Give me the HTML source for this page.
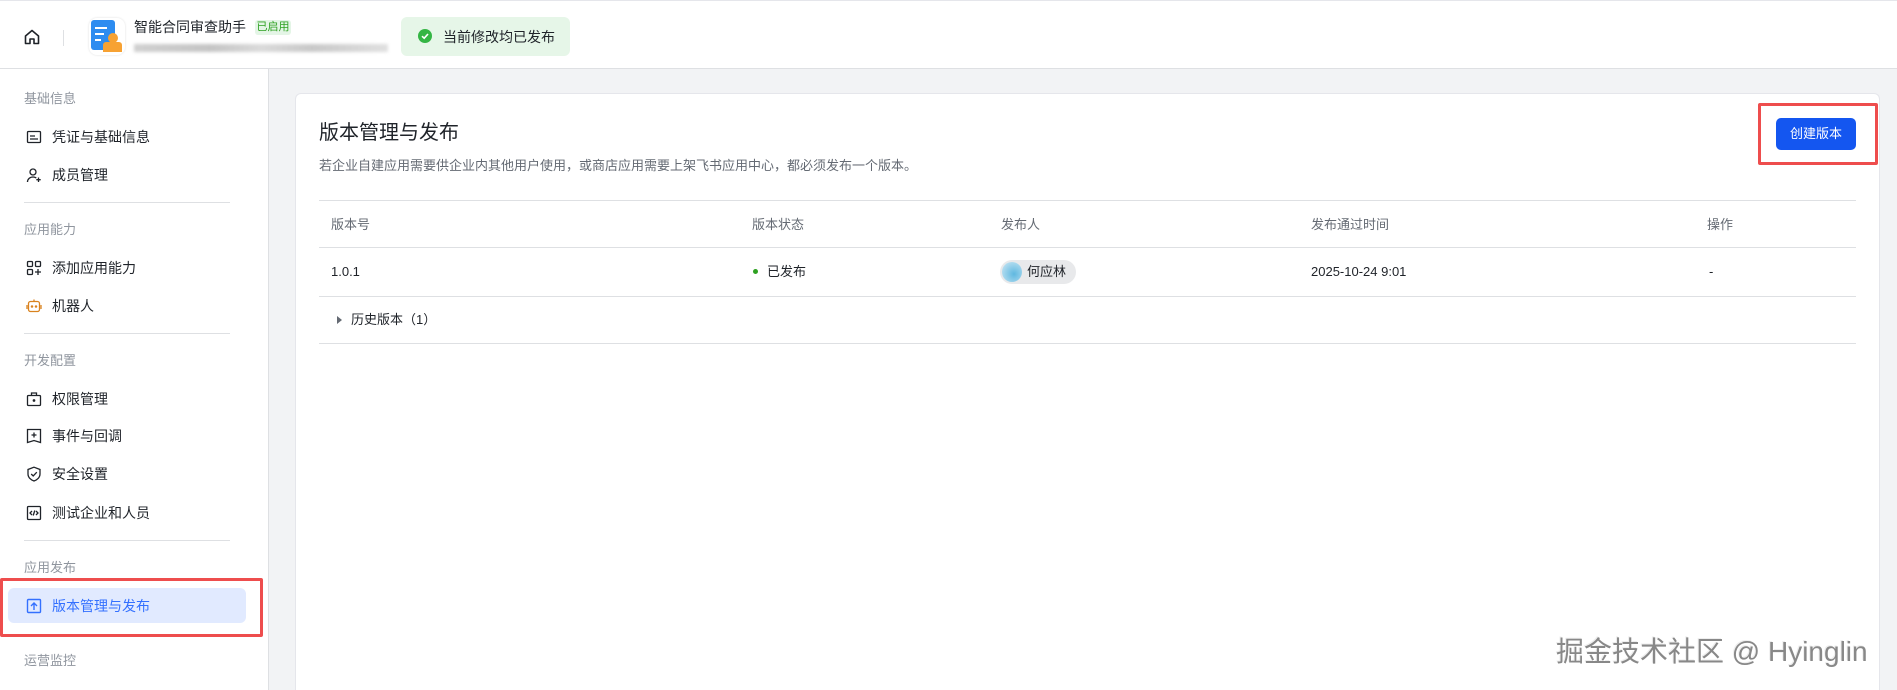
<!DOCTYPE html>
<html style="width:1897px;height:690px;overflow:hidden"><head><meta charset="utf-8"><style>
*{box-sizing:border-box;margin:0;padding:0}
body{width:1897px;height:690px;overflow:hidden;background:#f2f3f5;font-family:"Liberation Sans","Noto Sans CJK SC",sans-serif;color:#1f2329;position:relative}
.a{position:absolute}
.hdr{left:0;top:0;width:1897px;height:69px;background:#fff;border-top:1px solid #e5e6eb;border-bottom:1px solid #dee0e3}
.side{left:0;top:69px;width:269px;height:621px;background:#fff;border-right:1px solid #dee0e3}
.lbl{left:24px;font-size:13px;color:#8f959e;line-height:16px}
.it{left:52px;font-size:14px;color:#1f2329;line-height:16px}
.dv{left:24px;width:206px;height:1px;background:#dee0e3}
.ic{left:26px;width:16px;height:16px}
.card{left:295px;top:93px;width:1585px;height:597px;background:#fff;border:1px solid #e5e6eb;border-bottom:none;border-radius:6px 6px 0 0}
.th{font-size:13px;color:#646a73;top:217px;line-height:16px}
.td{font-size:13px;color:#1f2329;top:264px;line-height:16px}
.ln{left:319px;width:1537px;height:1px;background:#dee0e3}
</style></head><body>
<div class="a hdr"></div>
<svg class="a" style="left:23px;top:28px" width="18" height="18" viewBox="0 0 18 18" fill="none" stroke="#1f2329" stroke-width="1.6"><path d="M2.5 8 9 2.5 15.5 8V15.5H11V11H7V15.5H2.5Z" stroke-linejoin="round"/></svg>
<div class="a" style="left:63px;top:30px;width:1px;height:16px;background:#dee0e3"></div>
<div class="a" style="left:89px;top:18px;width:36px;height:37px;border-radius:8px;background:#fff;box-shadow:0 0 2px #ddd"></div>
<div class="a" style="left:91px;top:20px;width:24px;height:30px;border-radius:3px;background:#2d8cf0"></div>
<div class="a" style="left:95px;top:27px;width:12px;height:2px;background:#fff"></div>
<div class="a" style="left:95px;top:33px;width:9px;height:2px;background:#fff"></div>
<div class="a" style="left:95px;top:39px;width:6px;height:2px;background:#fff"></div>
<div class="a" style="left:108px;top:33px;width:10px;height:10px;border-radius:50%;background:#f7a233"></div>
<div class="a" style="left:103px;top:42px;width:19px;height:10px;border-radius:3px 3px 0 0;background:#f7a233"></div>
<div class="a" style="left:134px;top:19px;font-size:14px;line-height:16px">智能合同审查助手</div>
<div class="a" style="left:255px;top:20px;width:36px;height:15px;background:#e4f5e6;border-radius:3px;color:#2ea121;font-size:11px;line-height:15px;text-align:center">已启用</div>
<div class="a" style="left:134px;top:44px;width:254px;height:8px;background:linear-gradient(90deg,#d0d0d0,#c4c4c4 30%,#dadada 50%,#c8c8c8 70%,#e0e0e0);filter:blur(1.5px)"></div>
<div class="a" style="left:401px;top:17px;width:169px;height:39px;background:#e6f6e8;border-radius:6px"></div>
<div class="a" style="left:418px;top:29px;width:14px;height:14px;border-radius:50%;background:#34b544"></div>
<svg class="a" style="left:418px;top:29px" width="14" height="14" viewBox="0 0 14 14"><path d="M4 7.2 6.2 9.2 10 5" fill="none" stroke="#fff" stroke-width="1.6"/></svg>
<div class="a" style="left:443px;top:29px;font-size:14px;line-height:16px">当前修改均已发布</div>

<div class="a side"></div>
<div class="a lbl" style="top:91px">基础信息</div>
<svg class="a ic" style="top:129px" viewBox="0 0 16 16" fill="none" stroke="#1f2329" stroke-width="1.3"><rect x="1.5" y="2.5" width="13" height="11" rx="1"/><path d="M4 7h5M4 10h8"/></svg>
<div class="a it" style="top:129px">凭证与基础信息</div>
<svg class="a ic" style="top:167px" viewBox="0 0 16 16" fill="none" stroke="#1f2329" stroke-width="1.3"><circle cx="7" cy="5" r="3"/><path d="M1.5 15c0-3 2.5-5 5.5-5 1.5 0 2.5.4 3.3 1M12.5 10.5v4.5M10.3 12.7h4.4"/></svg>
<div class="a it" style="top:167px">成员管理</div>
<div class="a dv" style="top:202px"></div>
<div class="a lbl" style="top:222px">应用能力</div>
<svg class="a ic" style="top:260px" viewBox="0 0 16 16" fill="none" stroke="#1f2329" stroke-width="1.3"><rect x="1.5" y="1.5" width="5" height="5" rx="1"/><rect x="9.5" y="1.5" width="5" height="5" rx="1"/><rect x="1.5" y="9.5" width="5" height="5" rx="1"/><path d="M12 9v6M9 12h6"/></svg>
<div class="a it" style="top:260px">添加应用能力</div>
<svg class="a ic" style="top:298px" viewBox="0 0 16 16" fill="none" stroke="#d9821e" stroke-width="1.3"><rect x="2.5" y="3.5" width="11" height="10" rx="2"/><path d="M1 7v4M15 7v4M8 1.5v2"/><circle cx="6" cy="8.5" r=".6" fill="#d9821e"/><circle cx="10" cy="8.5" r=".6" fill="#d9821e"/></svg>
<div class="a it" style="top:298px">机器人</div>
<div class="a dv" style="top:333px"></div>
<div class="a lbl" style="top:353px">开发配置</div>
<svg class="a ic" style="top:391px" viewBox="0 0 16 16" fill="none" stroke="#1f2329" stroke-width="1.3"><rect x="1.5" y="4.5" width="13" height="10" rx="1"/><path d="M5.5 4.5V2h5v2.5"/><circle cx="8" cy="9.5" r=".7" fill="#1f2329"/></svg>
<div class="a it" style="top:391px">权限管理</div>
<svg class="a ic" style="top:428px" viewBox="0 0 16 16" fill="none" stroke="#1f2329" stroke-width="1.3"><path d="M1.5 1.5h13v13l-6.5-2-6.5 2z"/><path d="M8 4.5v5M5.5 7h5"/></svg>
<div class="a it" style="top:428px">事件与回调</div>
<svg class="a ic" style="top:466px" viewBox="0 0 16 16" fill="none" stroke="#1f2329" stroke-width="1.3"><path d="M8 1.2 14 3.5V8c0 3.5-3 6-6 7-3-1-6-3.5-6-7V3.5z"/><path d="M5.2 8 7.2 10 10.8 6.2"/></svg>
<div class="a it" style="top:466px">安全设置</div>
<svg class="a ic" style="top:505px" viewBox="0 0 16 16" fill="none" stroke="#1f2329" stroke-width="1.3"><rect x="1.5" y="1.5" width="13" height="13" rx="1"/><path d="M6 6 4 8l2 2M10 6l2 2-2 2M8.8 5.5 7.2 10.5"/></svg>
<div class="a it" style="top:505px">测试企业和人员</div>
<div class="a dv" style="top:540px"></div>
<div class="a lbl" style="top:560px">应用发布</div>
<div class="a" style="left:8px;top:588px;width:238px;height:35px;background:#e1eaff;border-radius:6px"></div>
<svg class="a ic" style="top:598px" viewBox="0 0 16 16" fill="none" stroke="#3370ff" stroke-width="1.4"><rect x="1.5" y="1.5" width="13" height="13" rx="1"/><path d="M8 12V5M5 8l3-3 3 3"/></svg>
<div class="a it" style="top:598px;color:#3370ff">版本管理与发布</div>
<div class="a" style="left:0;top:578px;width:263px;height:59px;border:3px solid #ee4d4d;border-radius:2px"></div>
<div class="a lbl" style="top:653px">运营监控</div>

<div class="a card"></div>
<div class="a" style="left:319px;top:121px;font-size:20px;line-height:24px">版本管理与发布</div>
<div class="a" style="left:319px;top:158px;font-size:13px;color:#646a73;line-height:16px">若企业自建应用需要供企业内其他用户使用，或商店应用需要上架飞书应用中心，都必须发布一个版本。</div>
<div class="a" style="left:1776px;top:118px;width:80px;height:32px;background:#1456f0;border-radius:5px;color:#fff;font-size:13px;line-height:32px;text-align:center">创建版本</div>
<div class="a" style="left:1758px;top:103px;width:120px;height:62px;border:3px solid #ee4d4d;border-radius:2px"></div>
<div class="a ln" style="top:200px"></div>
<div class="a th" style="left:331px">版本号</div>
<div class="a th" style="left:752px">版本状态</div>
<div class="a th" style="left:1001px">发布人</div>
<div class="a th" style="left:1311px">发布通过时间</div>
<div class="a th" style="left:1707px">操作</div>
<div class="a ln" style="top:247px"></div>
<div class="a td" style="left:331px">1.0.1</div>
<div class="a" style="left:753px;top:269px;width:5px;height:5px;border-radius:50%;background:#2ea121"></div>
<div class="a td" style="left:767px">已发布</div>
<div class="a" style="left:1000px;top:260px;width:76px;height:24px;border-radius:12px;background:#e8e9eb"></div>
<div class="a" style="left:1002px;top:262px;width:20px;height:20px;border-radius:50%;background:radial-gradient(circle at 60% 60%,#5fb8e0,#cfe9f5)"></div>
<div class="a td" style="left:1027px">何应林</div>
<div class="a td" style="left:1311px">2025-10-24 9:01</div>
<div class="a td" style="left:1709px">-</div>
<div class="a ln" style="top:296px"></div>
<div class="a" style="left:337px;top:316px;width:0;height:0;border-left:5px solid #646a73;border-top:4px solid transparent;border-bottom:4px solid transparent"></div>
<div class="a td" style="left:351px;top:312px">历史版本（1）</div>
<div class="a ln" style="top:343px"></div>
<div class="a" style="left:1556px;top:636px;font-size:28px;line-height:32px;color:#888;text-shadow:1px 1px 0 #fff,-1px -1px 0 #eee;white-space:nowrap">掘金技术社区 @ Hyinglin</div>
</body></html>
